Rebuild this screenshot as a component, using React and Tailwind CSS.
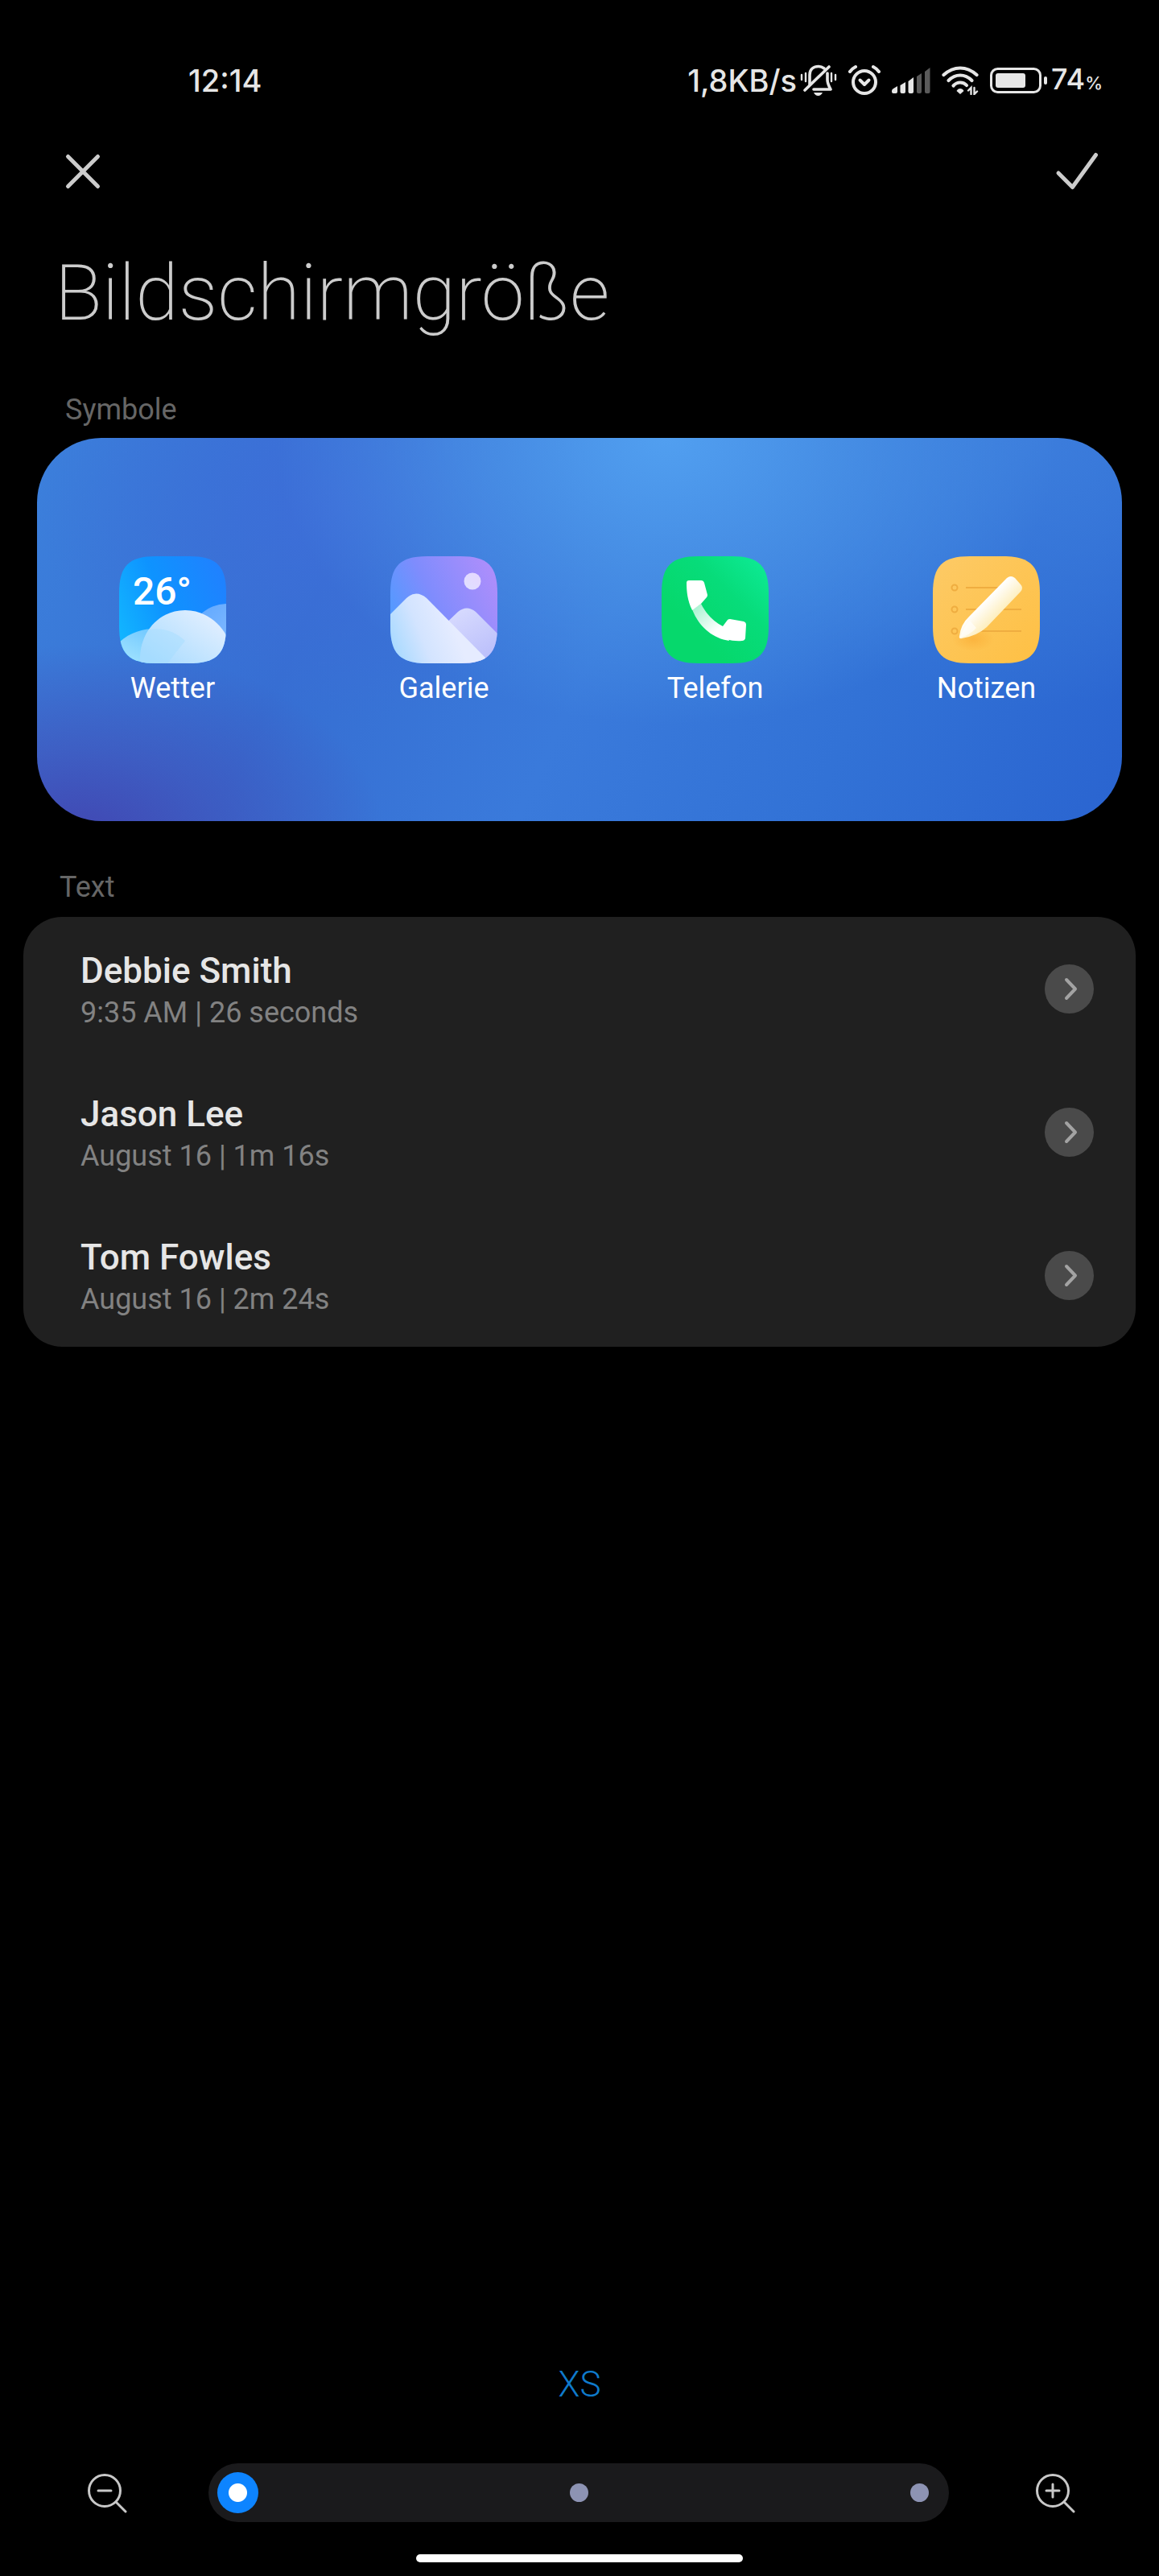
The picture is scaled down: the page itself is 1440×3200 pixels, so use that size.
import React, { useState } from "react";

const SIZES = ["XS", "S", "L"];

const CALLS = [
  { name: "Debbie Smith", info: "9:35 AM | 26 seconds" },
  { name: "Jason Lee", info: "August 16 | 1m 16s" },
  { name: "Tom Fowles", info: "August 16 | 2m 24s" },
];

const APPS = [
  { name: "Wetter", Icon: WeatherIcon },
  { name: "Galerie", Icon: GalleryIcon },
  { name: "Telefon", Icon: PhoneIcon },
  { name: "Notizen", Icon: NotesIcon },
];

const TILE = "M0 46C0 12 12 0 46 0H87C121 0 133 12 133 46V87C133 121 121 133 87 133H46C12 133 0 121 0 87Z";

function WeatherIcon() {
  return (
    <svg viewBox="0 0 133 133" className="w-[133px] h-[133px]" aria-hidden="true">
      <defs>
        <clipPath id="w-clip"><path d={TILE} /></clipPath>
        <linearGradient id="w-bg" x1="0" y1="0.7" x2="1" y2="0.3">
          <stop offset="0" stopColor="#12b4ff" />
          <stop offset="0.45" stopColor="#0e93ff" />
          <stop offset="1" stopColor="#1f82ff" />
        </linearGradient>
        <linearGradient id="w-cloud" x1="0.1" y1="0.9" x2="0.9" y2="0.2">
          <stop offset="0" stopColor="#a9dcff" />
          <stop offset="1" stopColor="#e0eeff" />
        </linearGradient>
        <linearGradient id="w-left" x1="0" y1="1" x2="1" y2="0">
          <stop offset="0" stopColor="#a6e6ff" />
          <stop offset="1" stopColor="#5cbcff" />
        </linearGradient>
        <linearGradient id="w-right" x1="0" y1="0" x2="1" y2="1">
          <stop offset="0" stopColor="#5aa5ff" />
          <stop offset="1" stopColor="#a5cdff" />
        </linearGradient>
      </defs>
      <g clipPath="url(#w-clip)">
        <rect width="133" height="133" fill="url(#w-bg)" />
        <circle cx="134" cy="106" r="47" fill="url(#w-right)" />
        <path d="M0 107C14 94 30 90 45 90C62 90 78 98 88 112V133H0Z" fill="url(#w-left)" />
        <path d="M26 133C24 94 50 67 82 67C104 67 123 80 133 98V133Z" fill="url(#w-cloud)" />
        <path d="M26 133C25 117 29 103 37 91C53 88 70 93 82 105L60 133Z" fill="#9fdcff" opacity="0.4" />
        <text x="17" y="60" fill="#fff" className="font-['Roboto',sans-serif] text-[48px] font-medium">26°</text>
      </g>
    </svg>
  );
}

function GalleryIcon() {
  return (
    <svg viewBox="0 0 133 133" className="w-[133px] h-[133px]" aria-hidden="true">
      <defs>
        <clipPath id="g-clip"><path d={TILE} /></clipPath>
        <linearGradient id="g-bg" x1="0" y1="0.6" x2="1" y2="0.1">
          <stop offset="0" stopColor="#4f9bff" />
          <stop offset="0.4" stopColor="#7f8cfd" />
          <stop offset="1" stopColor="#b18efb" />
        </linearGradient>
        <linearGradient id="g-front" x1="0" y1="0.8" x2="0.7" y2="0.6">
          <stop offset="0" stopColor="#a5d9ff" />
          <stop offset="0.5" stopColor="#d3e4ff" />
          <stop offset="1" stopColor="#e6ecff" />
        </linearGradient>
        <linearGradient id="g-back" x1="0" y1="0" x2="0.6" y2="1">
          <stop offset="0" stopColor="#dcdfff" />
          <stop offset="1" stopColor="#bcc0fb" />
        </linearGradient>
        <linearGradient id="g-sun" x1="0" y1="1" x2="1" y2="0">
          <stop offset="0" stopColor="#dfe0ff" />
          <stop offset="1" stopColor="#e6d6ff" />
        </linearGradient>
      </defs>
      <g clipPath="url(#g-clip)">
        <rect width="133" height="133" fill="url(#g-bg)" />
        <circle cx="102" cy="31" r="10.5" fill="url(#g-sun)" />
        <path d="M60 92L84 69Q95 60 106 69L133 96V133H60Z" fill="url(#g-back)" />
        <path d="M0 72L20 52Q32 41 45 52L119 127V133H0Z" fill="url(#g-front)" />
      </g>
    </svg>
  );
}

function PhoneIcon() {
  return (
    <svg viewBox="0 0 133 133" className="w-[133px] h-[133px]" aria-hidden="true">
      <defs>
        <linearGradient id="p-bg" x1="0.3" y1="0.7" x2="1" y2="0">
          <stop offset="0" stopColor="#06d86c" />
          <stop offset="0.5" stopColor="#07dc7a" />
          <stop offset="1" stopColor="#0eec98" />
        </linearGradient>
        <linearGradient id="p-grip" x1="0.1" y1="0" x2="0.7" y2="0.7">
          <stop offset="0" stopColor="#a4f2cf" />
          <stop offset="1" stopColor="#fff" />
        </linearGradient>
      </defs>
      <path d={TILE} fill="url(#p-bg)" />
      <path d="M38 66L49 59C55 71 64 81 76 87L84 105C63 102 46 87 38 66Z" fill="url(#p-grip)" />
      <path d="M34 30H49Q52 30 53 33L57 48Q57 50 56 51L49 59L38 67C32 55 31 43 31 33Q31 30 34 30Z" fill="#fff" />
      <path d="M76 87L82 79Q83 78 85 78L102 81Q105 82 105 85L104 102Q103 105 100 105C88 106 77 103 68 98Z" fill="#fff" />
    </svg>
  );
}

function NotesIcon() {
  return (
    <svg viewBox="0 0 133 133" className="w-[133px] h-[133px]" aria-hidden="true">
      <defs>
        <linearGradient id="n-bg" x1="0" y1="0" x2="1" y2="1">
          <stop offset="0" stopColor="#fdca66" />
          <stop offset="1" stopColor="#fec044" />
        </linearGradient>
        <linearGradient id="n-pen" x1="0.4" y1="0.4" x2="0.65" y2="0.65">
          <stop offset="0" stopColor="#fff" />
          <stop offset="1" stopColor="#fdecb6" />
        </linearGradient>
        <radialGradient id="n-shade">
          <stop offset="0" stopColor="#f9a52c" stopOpacity="0.5" />
          <stop offset="1" stopColor="#f9a52c" stopOpacity="0" />
        </radialGradient>
      </defs>
      <path d={TILE} fill="url(#n-bg)" />
      <g fill="none" stroke="#efad40" strokeWidth="2">
        <circle cx="27" cy="39" r="3.5" />
        <circle cx="27" cy="66" r="3.5" />
        <circle cx="27" cy="93" r="3.5" />
        <path d="M41 39H110M41 66H110M41 93H110" />
      </g>
      <ellipse cx="50" cy="103" rx="26" ry="15" fill="url(#n-shade)" />
      <path d="M92 27Q97 23 102 27L109 35Q113 39 109 44L67 88Q55 99 36 102Q32 103 33 99Q35 84 45 75Z" fill="url(#n-pen)" />
      <path d="M34 101Q38 88 46 80L54 89Q46 98 34 101Z" fill="#fff" opacity="0.6" />
    </svg>
  );
}

function StatusBar() {
  return (
    <div className="flex h-12 items-center justify-between pl-[234px] pr-[70px] text-[38px] leading-[48px] font-medium text-[#e6e6e6] font-['Inter',sans-serif]">
      <span>12:14</span>
      <div className="flex items-center gap-[14px]">
        <div className="flex items-center gap-1">
          <span>1,8KB/s</span>
          {/* muted bell */}
          <svg viewBox="0 0 46 40" className="h-10 w-[46px]" fill="none" stroke="currentColor" strokeWidth="3.6" strokeLinecap="round">
            <path d="M12 25V13C12 6 17 2.5 23 2.5C26 2.5 28 3.5 30 5" />
            <path d="M34 11V19C34 24 36 27 38 31H17" strokeLinejoin="round" />
            <path d="M36 3L6 32" />
            <path d="M2 13V19M7 11V21M39 11V21M44 13V19" strokeWidth="2.4" />
            <path d="M17 35H28Q26 39 22.5 39Q19 39 17 35Z" fill="currentColor" stroke="none" />
          </svg>
        </div>
        {/* alarm */}
        <svg viewBox="0 0 40 40" className="h-10 w-10" fill="none" stroke="currentColor" strokeWidth="4" strokeLinecap="round">
          <circle cx="20" cy="22" r="14" />
          <path d="M14.5 19.5L20 25L25.5 19.5" strokeLinejoin="round" />
          <path d="M2 9Q5 5 9 3M31 3Q35 5 38 9" />
        </svg>
        {/* signal strength */}
        <svg viewBox="0 0 48 34" className="h-[34px] w-12" fill="currentColor">
          <path d="M0 30Q0 28 2 27L7 24V31Q7 33 5 33H2Q0 33 0 31Z" />
          <path d="M10.5 23L17 19V31Q17 33 15 33H12.5Q10.5 33 10.5 31Z" />
          <path d="M20.5 18L27 13V31Q27 33 25 33H22.5Q20.5 33 20.5 31Z" />
          <path d="M31 12L37 8V31Q37 33 35 33H33Q31 33 31 31Z" fill="#5a5a5a" />
          <path d="M41 6L47.5 1V31Q47.5 33 45.5 33H43Q41 33 41 31Z" fill="#5a5a5a" />
        </svg>
        {/* wifi with traffic arrows */}
        <svg viewBox="0 0 46 36" className="h-9 w-[46px]" fill="none" stroke="currentColor" strokeWidth="4.2" strokeLinecap="round">
          <path d="M2.5 11Q12 2.5 23 2.5T43.5 11" />
          <path d="M8.5 18Q15 11.5 23 11.5T37.5 18" />
          <path d="M14.5 24.5Q18 20.5 23 20.5T31 24" />
          <path d="M18.5 31Q20 28 23 28T27.5 31L23 35Z" fill="currentColor" stroke="none" />
          <path d="M36.5 35V27L33 30.5M40.5 27V35L44 31.5" strokeWidth="2.4" />
        </svg>
        <div className="flex items-center gap-1">
          {/* battery */}
          <svg viewBox="0 0 72 32" className="h-8 w-[72px]">
            <rect x="1.5" y="1.5" width="61" height="29" rx="8" fill="none" stroke="currentColor" strokeWidth="3" />
            <rect x="7" y="7" width="37" height="18" rx="3" fill="currentColor" />
            <rect x="67" y="11" width="4" height="10" rx="2" fill="currentColor" />
          </svg>
          <span className="text-[36px] leading-[48px]">74<span className="text-[22px]">%</span></span>
        </div>
      </div>
    </div>
  );
}

function IconPreview() {
  return (
    <section className="mx-[46px] mt-[11px] grid h-[476px] grid-cols-4 items-start rounded-[80px] bg-[radial-gradient(ellipse_36%_75%_at_58%_0%,#519ff0_0%,#4c97e9b0_45%,#4a90e600_100%),radial-gradient(ellipse_28%_50%_at_4%_104%,#4147b2_0%,#4150b8a0_45%,#3d5cc400_100%),radial-gradient(ellipse_28%_55%_at_28%_18%,#3d6ed8_0%,#3a6dd600_100%),radial-gradient(ellipse_30%_70%_at_92%_0%,#3c7ddc_0%,#3c7ddc00_100%),linear-gradient(115deg,#3c80dc_0%,#366ed2_28%,#3a7adb_52%,#3272d6_75%,#2a64d0_100%)] pt-[147px]">
      {APPS.map(({ name, Icon }) => (
        <div key={name} className="flex flex-col items-center gap-[7px]">
          <Icon />
          <span className="text-[36px] leading-[48px] text-white">{name}</span>
        </div>
      ))}
    </section>
  );
}

function CallList() {
  return (
    <ul className="mx-[29px] mt-[13px] rounded-[48px] bg-[#202020]">
      {CALLS.map((call) => (
        <li key={call.name} className="flex h-[178px] items-center justify-between pl-[71px] pr-[52px]">
          <div className="pt-1">
            <p className="text-[44px] leading-[56px] font-medium text-[#e6e6e6]">{call.name}</p>
            <p className="text-[36px] leading-[48px] text-[#828282]">{call.info}</p>
          </div>
          <button aria-label={call.name} className="flex h-[61px] w-[61px] items-center justify-center rounded-full bg-[#4a4a4a]">
            <svg viewBox="0 0 61 61" className="h-[61px] w-[61px]" fill="none" stroke="#a3a3a3" strokeWidth="4" strokeLinecap="round" strokeLinejoin="round">
              <path d="M27 19L38 30.5L27 42" />
            </svg>
          </button>
        </li>
      ))}
    </ul>
  );
}

function ZoomIcon({ plus }) {
  return (
    <svg viewBox="0 0 50 50" className="h-[50px] w-[50px]" fill="none" stroke="#c8c8c8" strokeWidth="3" strokeLinecap="round">
      <circle cx="22" cy="22" r="19.5" />
      <path d="M36 36L48 48" />
      <path d={plus ? "M14 22H30M22 14V30" : "M14 22H30"} />
    </svg>
  );
}

export default function App() {
  const [size, setSize] = useState(0);

  return (
    <main className="flex min-h-screen flex-col bg-black pt-[76px] pb-[17px] font-['Roboto',sans-serif]">
      <StatusBar />

      <header className="mt-[65px] flex h-12 items-center justify-between pl-[79px] pr-[74px]">
        <button aria-label="Abbrechen">
          <svg viewBox="0 0 48 48" className="h-12 w-12" fill="none" stroke="#cccccc" strokeWidth="5" strokeLinecap="round">
            <path d="M5.5 5.5L42.5 42.5M42.5 5.5L5.5 42.5" />
          </svg>
        </button>
        <button aria-label="Übernehmen">
          <svg viewBox="0 0 56 48" className="h-12 w-14" fill="none" stroke="#cccccc" strokeWidth="5" strokeLinecap="round" strokeLinejoin="round">
            <path d="M5 26L22.5 43.500L51.5 3.500" />
          </svg>
        </button>
      </header>

      <h1 className="mt-[69px] pl-[68px] text-[97px] leading-[116px] font-extralight text-[#cccccc]">Bildschirmgröße</h1>

      <h2 className="mt-[63px] pl-[81px] text-[36px] leading-[48px] text-[#666666]">Symbole</h2>
      <IconPreview />

      <h2 className="mt-[58px] pl-[74px] text-[36px] leading-[48px] text-[#666666]">Text</h2>
      <CallList />

      <footer className="mt-auto">
        <label htmlFor="size" className="block text-center text-[44px] leading-[56px] font-light text-[#0f7acb]">
          {SIZES[size]}
        </label>
        <div className="mt-[70px] flex items-center pl-[108px] pr-[104px]">
          <button aria-label="Kleiner" onClick={() => setSize(Math.max(0, size - 1))}>
            <ZoomIcon />
          </button>
          <div className="relative mr-[107px] ml-[101px] flex h-[73px] flex-1 items-center rounded-full bg-[#1a1a1c] px-[11px]">
            <div className="pointer-events-none absolute inset-x-[25px] flex justify-between">
              {SIZES.map((s) => (
                <span key={s} className="h-[23px] w-[23px] rounded-full bg-[#8d93b3]" />
              ))}
            </div>
            <input
              id="size"
              type="range"
              min="0"
              max="2"
              value={size}
              onChange={(e) => setSize(Number(e.target.value))}
              className="relative h-[51px] w-full appearance-none bg-transparent [&::-webkit-slider-thumb]:h-[51px] [&::-webkit-slider-thumb]:w-[51px] [&::-webkit-slider-thumb]:appearance-none [&::-webkit-slider-thumb]:rounded-full [&::-webkit-slider-thumb]:bg-[radial-gradient(circle,#ffffff_11px,#0d84ff_12px)]"
            />
          </div>
          <button aria-label="Größer" onClick={() => setSize(Math.min(2, size + 1))}>
            <ZoomIcon plus />
          </button>
        </div>
        <div className="mx-auto mt-10 h-[10px] w-[406px] rounded-full bg-white" />
      </footer>
    </main>
  );
}
